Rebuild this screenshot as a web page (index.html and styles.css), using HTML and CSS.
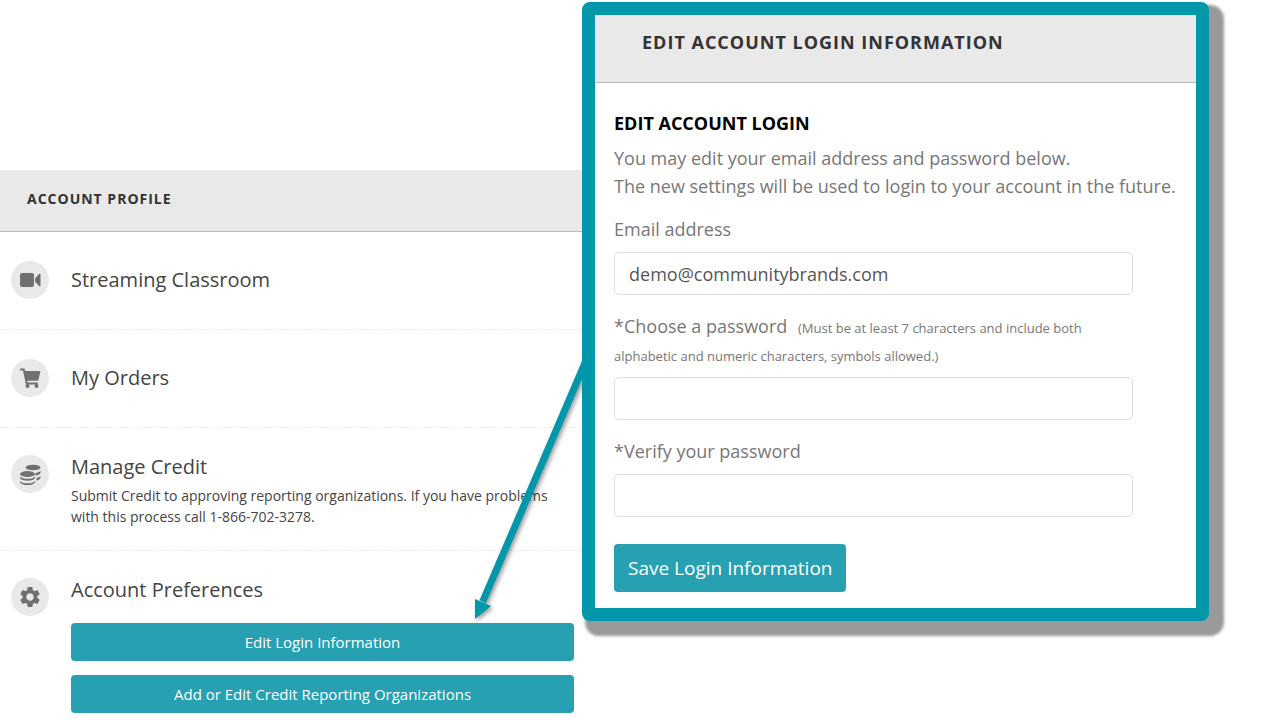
FILE: index.html
```html
<!DOCTYPE html>
<html lang="en">
<head>
<meta charset="utf-8">
<title>Account Profile</title>
<link rel="stylesheet" href="styles.css">
</head>
<body>
<main class="page">
  <section class="profile">
    <h1 class="bar">Account Profile</h1>
    <ul class="list">
      <li class="row">
        <span class="icon"><svg viewBox="0 0 38 38"><rect x="9" y="12" width="14" height="14" rx="2"/><path d="M24 17.500l4-4.500q1.500-.8 1.500 1v10q0 1.800-1.500 1l-4-4.500z"/></svg></span>
        <h2 class="name">Streaming Classroom</h2>
      </li>
      <li class="row">
        <span class="icon"><svg viewBox="0 0 38 38"><path d="M9 9.500h4.500l.8 2.500H29.500l-2.300 9.700H16.200l.4 1.800h10.200v2H14.900L12 11.500H9z"/><circle cx="16.500" cy="27" r="2"/><circle cx="25.500" cy="27" r="2"/></svg></span>
        <h2 class="name">My Orders</h2>
      </li>
      <li class="row row-top">
        <span class="icon"><svg viewBox="0 0 38 38"><ellipse cx="22" cy="12.500" rx="7.500" ry="2.800"/><path d="M24.500 18q3.500-.6 5-2v1.800q-.5 2-5 3zM25.500 23q3-.6 4-2v1.800q-.5 2-4 3z"/><ellipse cx="16.500" cy="19" rx="7.500" ry="3"/><path d="M9 21.500q2 2.300 7.500 2.300t7.500-2.300v1.500q-1.500 2.800-7.500 2.800T9 23zM9 26q2 2.300 7.500 2.300T24 26v1.300q-1.500 2.800-7.500 2.800T9 27.300z"/></svg></span>
        <div class="text">
          <h2 class="name">Manage Credit</h2>
          <p class="note">Submit Credit to approving reporting organizations. If you have problems with this process call 1-866-702-3278.</p>
        </div>
      </li>
      <li class="row row-top">
        <span class="icon"><svg viewBox="0 0 24 24"><path transform="translate(4.200 4.200) scale(.65)" d="M19.140 12.940c.04-.3.06-.61.06-.94 0-.32-.02-.64-.07-.94l2.030-1.580c.18-.14.23-.41.12-.61l-1.920-3.320c-.12-.22-.37-.29-.59-.22l-2.390.96c-.5-.38-1.030-.7-1.620-.94l-.36-2.540c-.04-.24-.24-.41-.48-.41h-3.840c-.24 0-.43.17-.47.41l-.36 2.540c-.59.24-1.130.57-1.620.94l-2.390-.96c-.22-.08-.47 0-.59.22L2.740 8.870c-.12.21-.08.47.12.61l2.030 1.580c-.05.3-.09.63-.09.94s.02.64.07.94l-2.030 1.580c-.18.14-.23.41-.12.61l1.920 3.320c.12.22.37.29.59.22l2.390-.96c.5.38 1.030.7 1.620.94l.36 2.540c.05.24.24.41.48.41h3.840c.24 0 .44-.17.47-.41l.36-2.540c.59-.24 1.130-.56 1.620-.94l2.390.96c.22.08.47 0 .59-.22l1.920-3.320c.12-.22.07-.47-.12-.61zM12 15.600c-1.980 0-3.600-1.620-3.600-3.600s1.620-3.600 3.600-3.600 3.600 1.620 3.600 3.600-1.620 3.600-3.600 3.600z"/></svg></span>
        <div class="text">
          <h2 class="name">Account Preferences</h2>
          <div class="actions">
            <button class="btn" type="button">Edit Login Information</button>
            <button class="btn" type="button">Add or Edit Credit Reporting Organizations</button>
          </div>
        </div>
      </li>
    </ul>
  </section>

  <svg class="arrow" viewBox="0 0 130 280" aria-hidden="true"><path d="M130 -11 21.700 241.700" stroke="#0097ab" stroke-width="7"/><path fill="#0097ab" d="M14 259V239L30 246z"/></svg>

  <section class="panel">
    <h2 class="panel-bar">Edit Account Login Information</h2>
    <form class="form">
      <h3 class="form-title">Edit Account Login</h3>
      <p class="intro">You may edit your email address and password below.<br>The new settings will be used to login to your account in the future.</p>
      <div class="field">
        <label for="email">Email address</label>
        <input id="email" type="email" value="demo@communitybrands.com">
      </div>
      <div class="field">
        <label for="password">*Choose a password <small class="hint">(Must be at least 7 characters and include both alphabetic and numeric characters, symbols allowed.)</small></label>
        <input id="password" type="password">
      </div>
      <div class="field">
        <label for="verify">*Verify your password</label>
        <input id="verify" type="password">
      </div>
      <button class="btn save" type="button">Save Login Information</button>
    </form>
  </section>
</main>
</body>
</html>
```
FILE: styles.css
```css
* {
  box-sizing: border-box;
}

body {
  margin: 0;
  background: #fff;
  color: #444;
  font-family: "Open Sans", "Noto Sans", sans-serif;
}

h1, h2, h3, p, ul {
  margin: 0;
  padding: 0;
}

.page {
  position: relative;
  display: flex;
  align-items: flex-start;
  padding-right: 71px;
}

.profile {
  flex: 1;
  min-width: 0;
  padding-top: 170px;
}

.bar {
  padding: 17px 27px 20px;
  border-bottom: 1px solid #bbb;
  background: #e9e9e9;
  color: #333;
  font-size: 14px;
  line-height: 24px;
  font-weight: 700;
  letter-spacing: 1px;
  text-transform: uppercase;
}

.list {
  list-style: none;
}

.row {
  display: flex;
  align-items: center;
  gap: 22px;
  min-height: 98px;
  padding: 0 8px 2px 11px;
  border-bottom: 1px dashed #e9e9e9;
}

.row-top {
  align-items: flex-start;
  padding-top: 25px;
  padding-bottom: 23px;
}

.row:last-child {
  border-bottom: 0;
  padding-bottom: 6px;
}

.row-top .icon {
  margin-top: 2px;
}

.icon {
  flex: none;
  width: 38px;
  height: 38px;
  border-radius: 50%;
  background: #e9e9e9;
}

.icon svg {
  display: block;
  fill: #707070;
}

.text {
  flex: 1;
}

.name {
  color: #444;
  font-size: 20px;
  line-height: 28px;
  font-weight: 400;
}

.note {
  margin-top: 4px;
  font-size: 14px;
  line-height: 21px;
}

.actions {
  display: flex;
  flex-direction: column;
  gap: 14px;
  margin-top: 19px;
}

.btn {
  height: 38px;
  border: 0;
  border-radius: 4px;
  background: #27a0b2;
  color: #fff;
  font-family: inherit;
  font-size: 15px;
}

.panel {
  position: relative;
  flex: 0 0 51.86%;
  min-width: 0;
  margin-top: 2px;
  border: 13px solid #0097ab;
  border-radius: 8px;
  background: #fff;
  box-shadow: 9px 9px 3px 6px #999;
}

.panel-bar {
  padding: 13px 47px 26px;
  border-bottom: 1px solid #bbb;
  background: #e9e9e9;
  color: #333;
  font-size: 18px;
  line-height: 28px;
  font-weight: 700;
  letter-spacing: 1px;
  text-transform: uppercase;
}

.form {
  padding: 26px 19px 16px;
  color: #777;
  font-size: 18px;
  line-height: 28px;
}

.form-title {
  margin-bottom: 7px;
  color: #000;
  font-size: 18px;
  line-height: 28px;
  font-weight: 700;
  text-transform: uppercase;
}

.intro {
  margin-bottom: 15px;
  white-space: nowrap;
}

.field {
  max-width: 519px;
  margin-bottom: 17px;
}

.field label {
  display: block;
  margin-bottom: 9px;
}

.hint {
  margin-left: 6px;
  font-size: 13px;
  line-height: 16px;
}

.field input {
  display: block;
  width: 100%;
  height: 43px;
  padding: 0 14px;
  border: 1px solid #ddd;
  border-radius: 5px;
  background: #fff;
  color: #555;
  font-family: inherit;
  font-size: 18px;
}

.save {
  height: 48px;
  margin-top: 10px;
  padding: 0 14px;
  font-size: 19px;
}

.arrow {
  position: absolute;
  top: 360px;
  left: 461px;
  width: 130px;
  height: 280px;
  overflow: visible;
  filter: drop-shadow(2px 2px 2px #0006);
  pointer-events: none;
}
```
